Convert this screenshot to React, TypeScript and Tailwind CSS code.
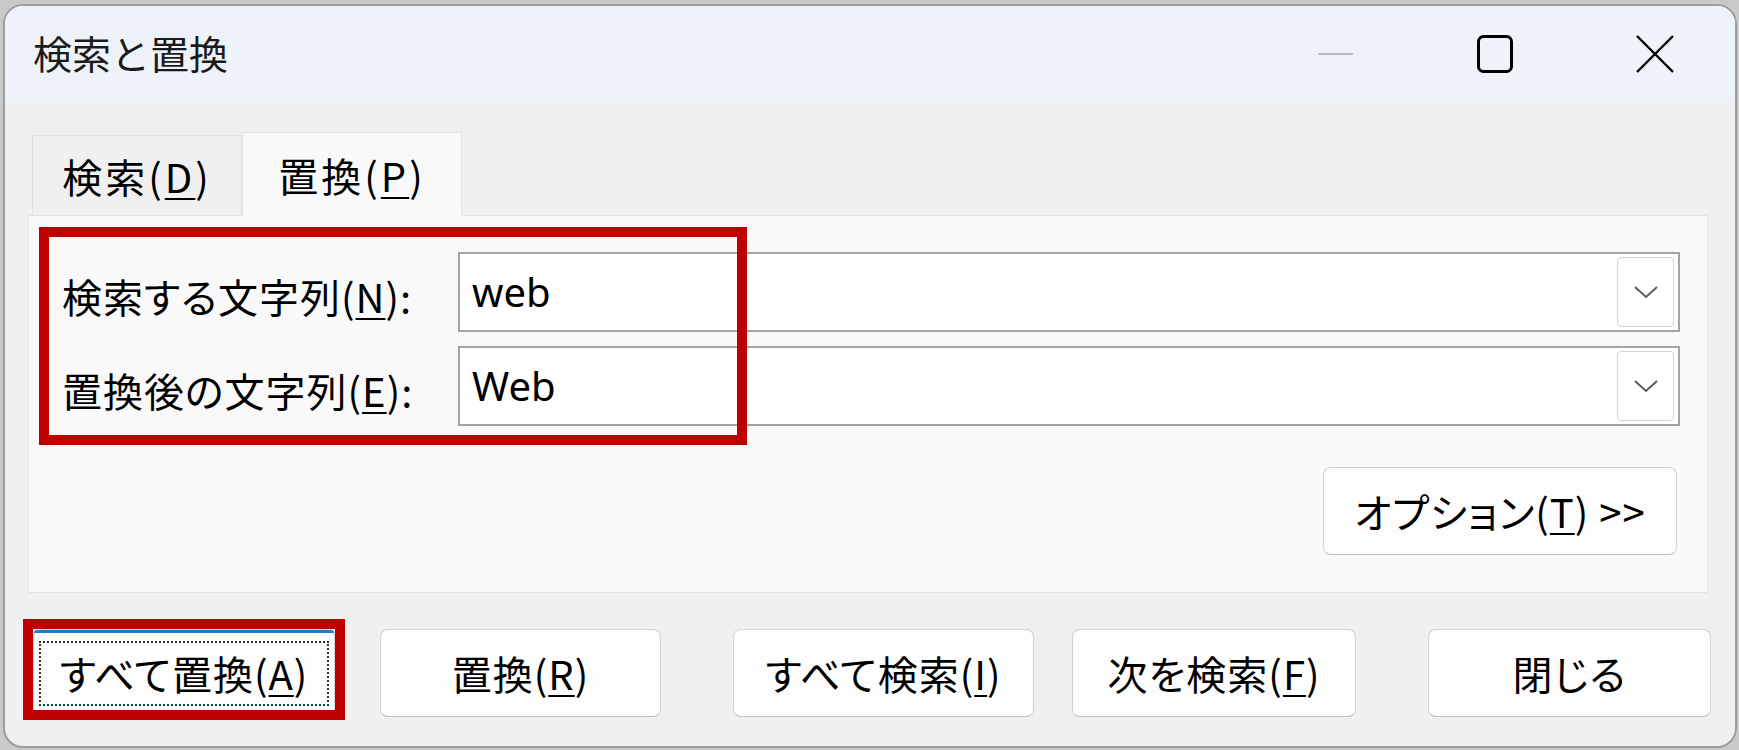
import React from 'react';

const Key: React.FC<{ k: string }> = ({ k }) => (
  <span className="underline decoration-[2px] underline-offset-[5px]">{k}</span>
);

const Chevron = () => (
  <svg width="26" height="16" viewBox="0 0 26 16" fill="none">
    <path d="M2 3 L13 13 L24 3" stroke="#5a5a5a" strokeWidth="2" />
  </svg>
);

const ComboRow: React.FC<{ label: React.ReactNode; value: string }> = ({ label, value }) => (
  <div className="flex items-center h-[80px]">
    <div className="w-[396px] text-[40px] leading-none tracking-[1px] text-black pt-[8px]">{label}</div>
    <div className="flex-1 h-[80px] bg-white border-2 border-[#a4a4a4] flex items-center pl-[12px] pr-[4px]">
      <span className="flex-1 font-['Segoe_UI','Noto_Sans',sans-serif] text-[40px] leading-none text-black">{value}</span>
      <div className="w-[57px] h-[70px] rounded-[4px] border border-[#d4d4d4] bg-white flex items-center justify-center">
        <Chevron />
      </div>
    </div>
  </div>
);

const DialogButton: React.FC<{ w: string; children: React.ReactNode; focused?: boolean }> = ({ w, children, focused }) => (
  <div
    className={`relative ${w} h-[88px] rounded-[8px] border border-[#d2d2d2] border-b-[#bdbdbd] bg-[#fdfdfd] flex items-center justify-center text-[40px] leading-none tracking-[1px] text-black`}
  >
    {focused && (
      <>
        <div className="absolute left-0 right-0 top-0 h-[3px] bg-[#1f7ad6] rounded-t-[8px]" />
        <div className="absolute left-[5px] right-[5px] top-[11px] bottom-[10px] border-2 border-dotted border-[#333]" />
      </>
    )}
    <span className="relative">{children}</span>
  </div>
);

export default function App() {
  return (
    <div className="w-[1739px] h-[750px] overflow-hidden bg-[#c9c9c9] pt-[4px] pl-[3px] font-['Noto_Sans_CJK_JP',sans-serif] [font-feature-settings:'palt']">
      <div className="relative w-[1734px] h-[744px] rounded-[20px] border-2 border-[#9d9d9d] bg-[#f0f0f0] overflow-hidden flex flex-col">
        {/* title bar */}
        <div className="h-[96px] shrink-0 bg-[#eef2f9] flex items-center">
          <div className="flex-1 pl-[28px] text-[39px] leading-none text-[#1b1b1b] [font-feature-settings:normal] pb-[4px]">
            検索と置換
          </div>
          <div className="flex h-full">
            <div className="w-[160px] flex items-center justify-center">
              <div className="w-[35px] h-[2px] bg-[#b9bcc2]" />
            </div>
            <div className="w-[160px] flex items-center justify-center">
              <svg width="36" height="38" viewBox="0 0 36 38" fill="none">
                <rect x="1.5" y="1.5" width="33" height="35" rx="5" stroke="#000" strokeWidth="3" />
              </svg>
            </div>
            <div className="w-[160px] flex items-center justify-center">
              <svg width="38" height="38" viewBox="0 0 38 38" fill="none">
                <path d="M1 1 L37 37 M37 1 L1 37" stroke="#000" strokeWidth="2.4" />
              </svg>
            </div>
          </div>
        </div>

        {/* body */}
        <div className="flex-1 px-[23px] flex flex-col">
          <div className="flex items-end pt-[30px] pl-[4px] h-[113px]">
            <div className="w-[210px] h-[80px] border border-b-0 border-[#e1e1e1] bg-[#f0f0f0] flex items-center justify-center text-[40px] leading-none tracking-[3px] text-black">
              検索(<Key k="D" />)
            </div>
            <div className="relative z-10 w-[220px] h-[84px] -mb-px border border-b-0 border-[#e3e3e3] bg-[#f9f9f9] flex items-center justify-center text-[40px] leading-none tracking-[3px] text-black">
              置換(<Key k="P" />)
            </div>
          </div>

          <div className="w-[1680px] h-[378px] border border-[#e3e3e3] bg-[#f9f9f9] pt-[36px] pl-[33px] pr-[27px] flex flex-col">
            <div className="flex flex-col gap-[14px]">
              <ComboRow label={<>検索する文字列(<Key k="N" />):</>} value="web" />
              <ComboRow label={<>置換後の文字列(<Key k="E" />):</>} value="Web" />
            </div>
            <div className="flex justify-end mt-[41px] pr-[3px]">
              <DialogButton w="w-[354px]">
                オプション(<Key k="T" />) &gt;&gt;
              </DialogButton>
            </div>
          </div>

          <div className="flex mt-[36px] ml-[5px]">
            <DialogButton w="w-[302px]" focused>
              すべて置換(<Key k="A" />)
            </DialogButton>
            <div className="ml-[45px]">
              <DialogButton w="w-[281px]">
                置換(<Key k="R" />)
              </DialogButton>
            </div>
            <div className="ml-[72px]">
              <DialogButton w="w-[301px]">
                すべて検索(<Key k="I" />)
              </DialogButton>
            </div>
            <div className="ml-[38px]">
              <DialogButton w="w-[284px]">
                次を検索(<Key k="F" />)
              </DialogButton>
            </div>
            <div className="ml-[72px]">
              <DialogButton w="w-[283px]">閉じる</DialogButton>
            </div>
          </div>
        </div>

        {/* annotation boxes */}
        <div className="absolute left-[34px] top-[221px] w-[708px] h-[218px] border-[10px] border-[#c00000]" />
        <div className="absolute left-[18px] top-[613px] w-[322px] h-[101px] border-[10px] border-[#c00000]" />
      </div>
    </div>
  );
}
